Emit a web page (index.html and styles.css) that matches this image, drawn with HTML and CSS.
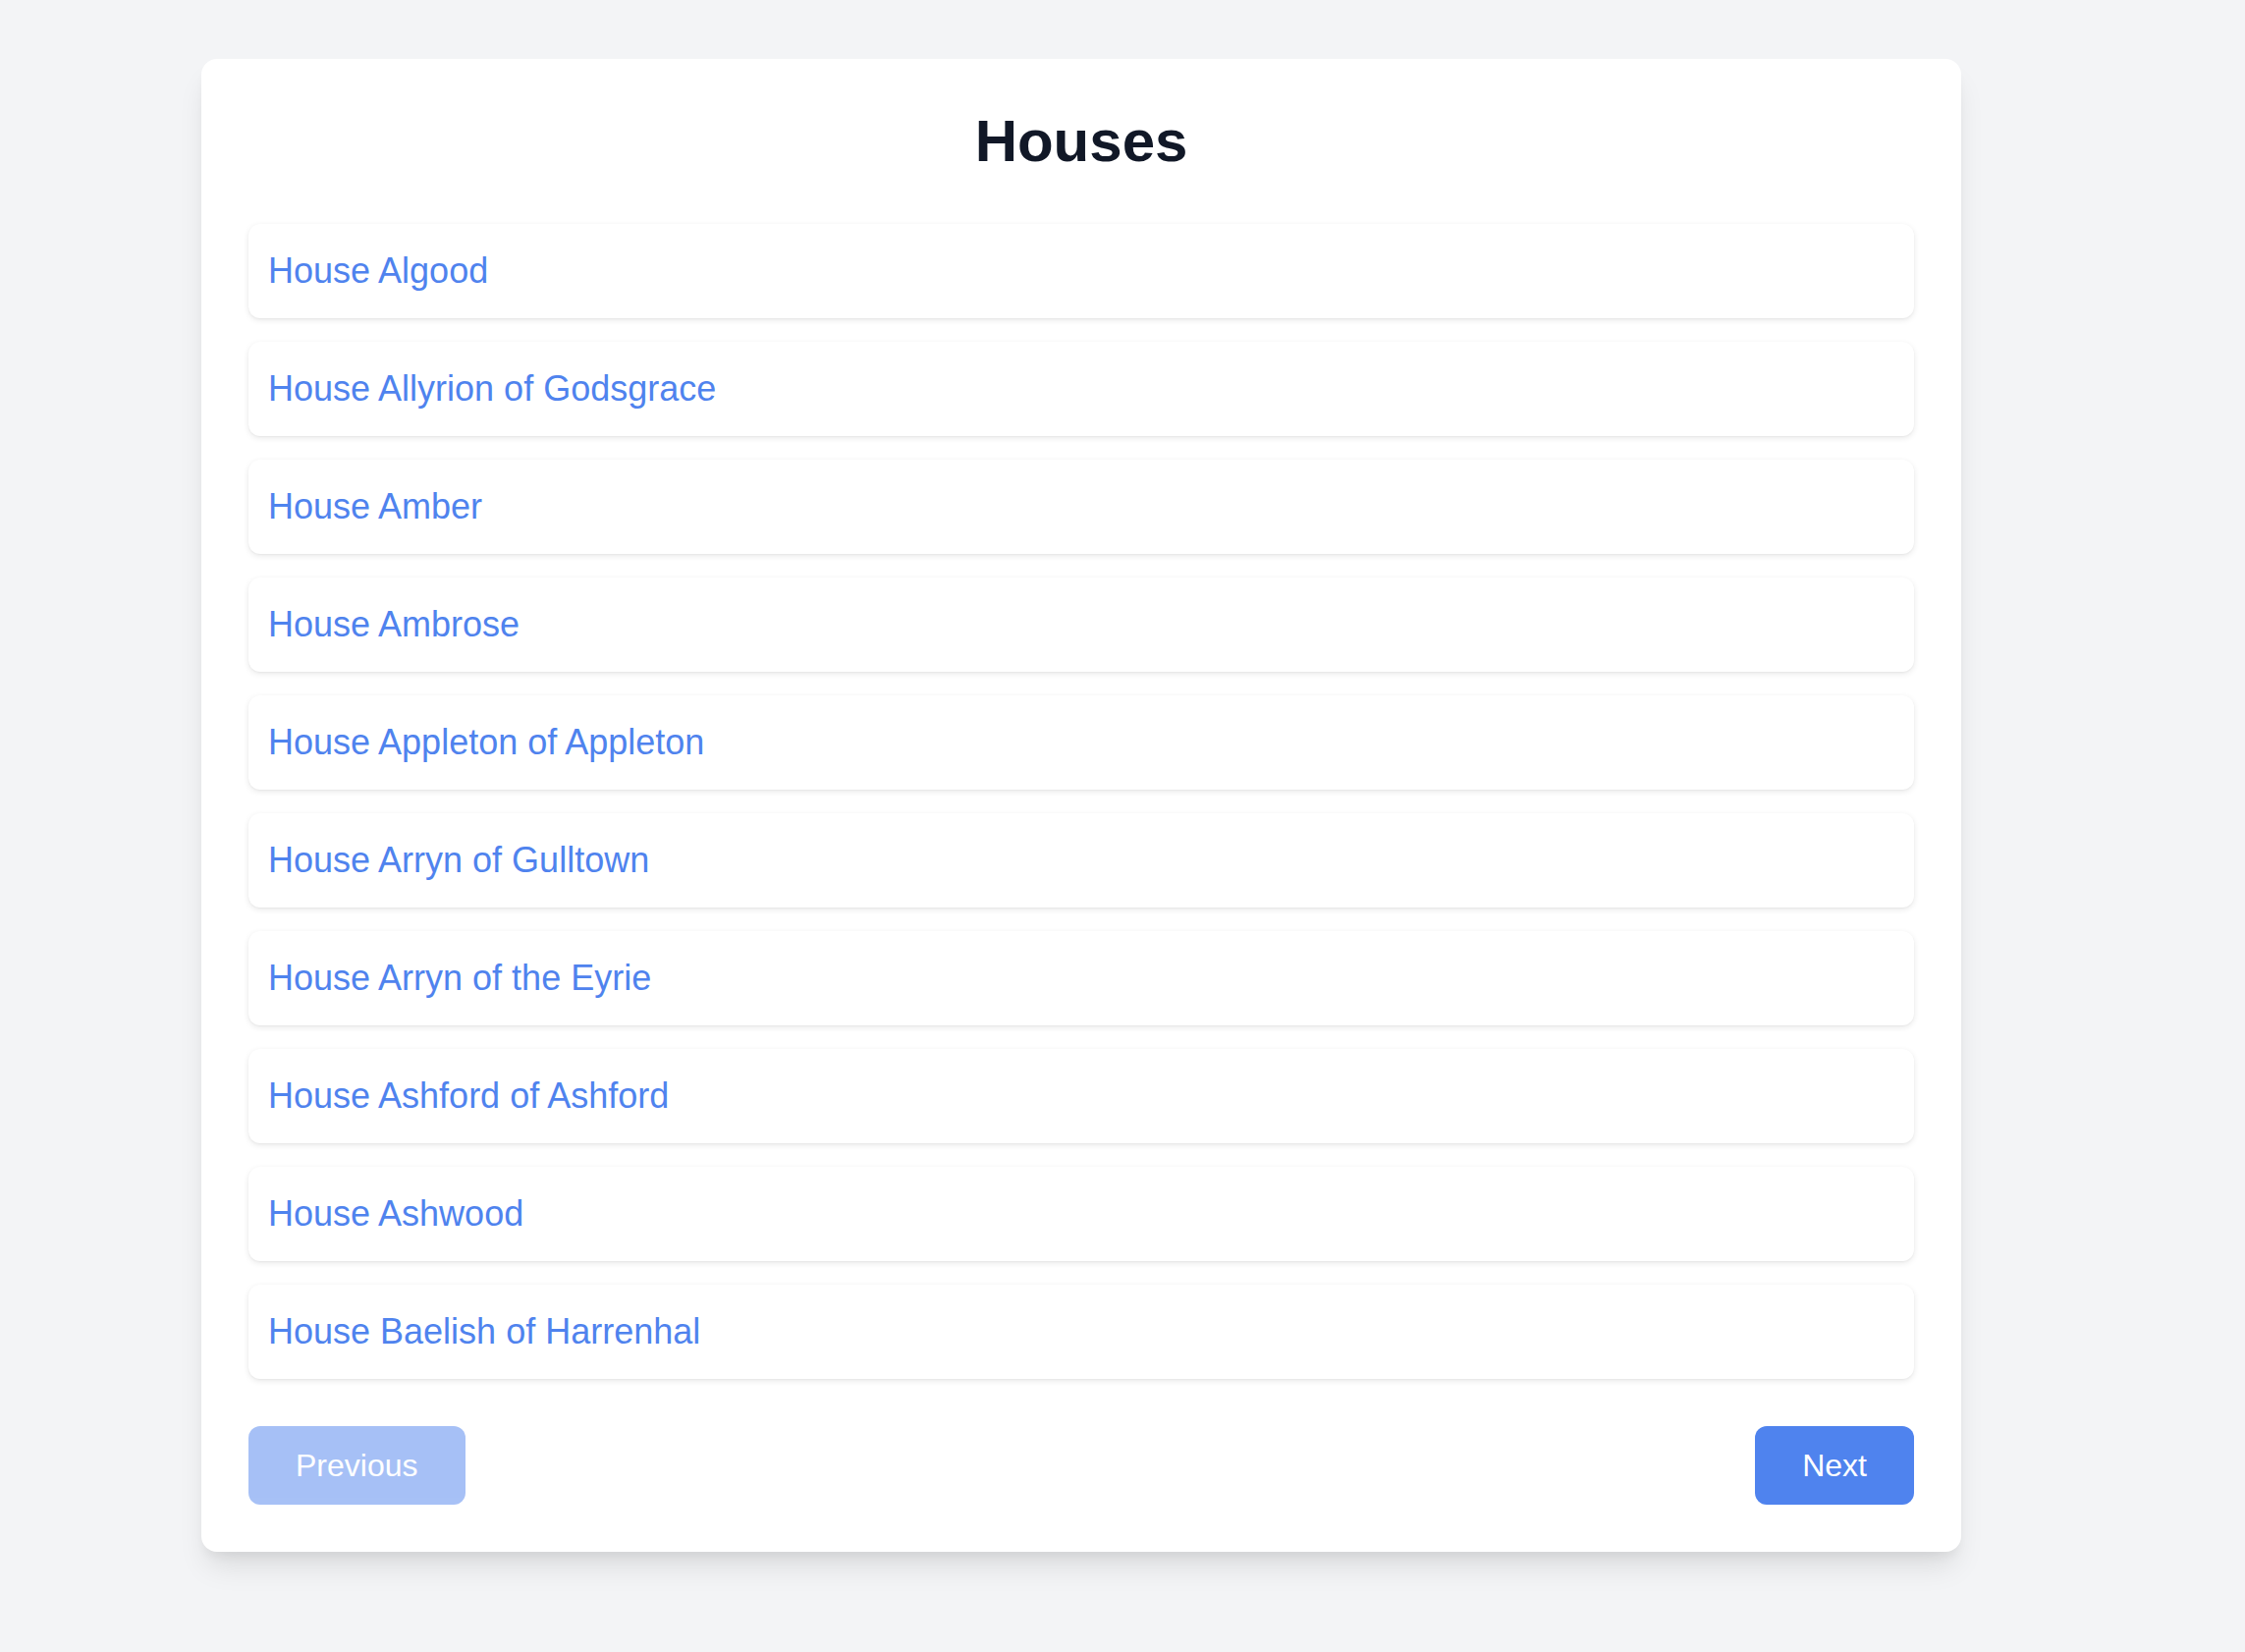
FILE: index.html
```html
<!DOCTYPE html>
<html lang="en">
<head>
<meta charset="utf-8">
<title>Houses</title>
<link rel="stylesheet" href="styles.css">
</head>
<body>
<main class="page">
  <section class="card">
    <h1 class="title">Houses</h1>
    <ul class="list">
      <li class="item"><a class="link" href="#">House Algood</a></li>
      <li class="item"><a class="link" href="#">House Allyrion of Godsgrace</a></li>
      <li class="item"><a class="link" href="#">House Amber</a></li>
      <li class="item"><a class="link" href="#">House Ambrose</a></li>
      <li class="item"><a class="link" href="#">House Appleton of Appleton</a></li>
      <li class="item"><a class="link" href="#">House Arryn of Gulltown</a></li>
      <li class="item"><a class="link" href="#">House Arryn of the Eyrie</a></li>
      <li class="item"><a class="link" href="#">House Ashford of Ashford</a></li>
      <li class="item"><a class="link" href="#">House Ashwood</a></li>
      <li class="item"><a class="link" href="#">House Baelish of Harrenhal</a></li>
    </ul>
    <div class="pager">
      <button class="btn btn-disabled" disabled>Previous</button>
      <button class="btn">Next</button>
    </div>
  </section>
</main>
</body>
</html>
```

FILE: styles.css
```css
html, body {
  margin: 0;
  padding: 0;
  background: #f3f4f6;
  font-family: "Liberation Sans", Arial, sans-serif;
}

.page {
  padding: 60px 0 0 205px;
  min-height: 1682px;
  box-sizing: border-box;
}

.card {
  width: 1792px;
  box-sizing: border-box;
  background: #ffffff;
  border-radius: 16px;
  padding: 48px;
  box-shadow: 0 20px 30px -6px rgba(0, 0, 0, 0.10), 0 8px 12px -4px rgba(0, 0, 0, 0.06);
}

.title {
  margin: 0 0 48px 0;
  text-align: center;
  font-size: 60px;
  line-height: 72px;
  font-weight: 700;
  color: #111827;
}

.list {
  list-style: none;
  margin: 0;
  padding: 0;
  display: flex;
  flex-direction: column;
  gap: 24px;
}

.item {
  background: #ffffff;
  border-radius: 12px;
  padding: 20px;
  box-shadow: 0 2px 6px rgba(0, 0, 0, 0.09), 0 1px 2px rgba(0, 0, 0, 0.04);
}

.link {
  display: block;
  font-size: 36px;
  line-height: 56px;
  color: #4f83ee;
  text-decoration: none;
}

.pager {
  display: flex;
  justify-content: space-between;
  margin-top: 48px;
}

.btn {
  font-family: "Liberation Sans", Arial, sans-serif;
  font-size: 32px;
  line-height: 48px;
  padding: 16px 48px;
  border: none;
  border-radius: 12px;
  background: #4f83ee;
  color: #ffffff;
}

.btn-disabled {
  opacity: 0.5;
}
```
